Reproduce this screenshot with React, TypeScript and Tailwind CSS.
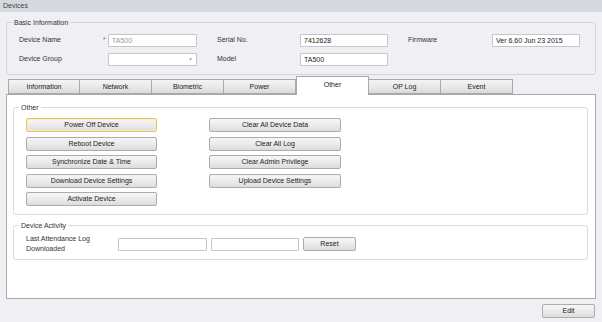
const LEFT_ACTIONS = ['Power Off Device', 'Reboot Device', 'Synchronize Date & Time', 'Download Device Settings', 'Activate Device']
const RIGHT_ACTIONS = ['Clear All Device Data', 'Clear All Log', 'Clear Admin Privilege', 'Upload Device Settings']
const TABS = ['Information', 'Network', 'Biometric', 'Power', 'Other', 'OP Log', 'Event']

function Btn({ label, focused = false, className = '' }: { label: string; focused?: boolean; className?: string }) {
  return (
    <button
      className={
        'h-[14px] rounded-[2px] border bg-gradient-to-b from-[#f6f6f6] via-[#ebebeb] to-[#dcdcdc] text-[7px] leading-[12px] text-[#222] ' +
        (focused ? 'border-[#e3c26a] shadow-[inset_0_0_0_1px_#fbeec4] ' : 'border-[#acacac] ') +
        className
      }
    >
      {label}
    </button>
  )
}

function Field({ value = '', muted = false, dropdown = false, className = '' }: { value?: string; muted?: boolean; dropdown?: boolean; className?: string }) {
  return (
    <div
      className={
        'relative h-[13px] rounded-[1px] border border-[#c3c6cc] bg-white px-[3px] text-[7px] leading-[11px] ' +
        (muted ? 'text-[#9a9a9a] ' : 'text-[#222] ') +
        className
      }
    >
      {value}
      {dropdown && <span className="absolute right-[3px] top-0 text-[5px] leading-[11px] text-[#b0b0b0]">▼</span>}
    </div>
  )
}

function GroupLabel({ text }: { text: string }) {
  return <span className="absolute left-[5px] top-[-5px] bg-inherit px-[2px] text-[7px] leading-[9px] text-[#333]">{text}</span>
}

export default function App() {
  return (
    <div className="w-[602px] h-[322px] bg-[#efeff4] flex flex-col font-['Liberation_Sans',Arial,sans-serif] text-[7px] text-[#333] overflow-hidden">
      {/* Title bar */}
      <div className="h-[12px] bg-[#d6d9e0] px-[3px] leading-[12px] text-[#444]">Devices</div>

      {/* Basic information */}
      <div className="relative mx-[6px] mt-[10px] h-[53px] rounded-[3px] border border-[#d6d6da] bg-[#efeff4] pl-[12px] pt-[11px] flex flex-col gap-[6px]">
        <GroupLabel text="Basic Information" />
        <div className="flex items-center">
          <span className="w-[84px]">Device Name</span>
          <span className="w-[5px] text-[#e0483c]">*</span>
          <Field value="TA500" muted className="w-[89px]" />
          <span className="ml-[20px] w-[83px]">Serial No.</span>
          <Field value="7412628" className="w-[88px]" />
          <span className="ml-[20px] w-[84px]">Firmware</span>
          <Field value="Ver 6.60 Jun 23 2015" className="w-[88px]" />
        </div>
        <div className="flex items-center">
          <span className="w-[89px]">Device Group</span>
          <Field dropdown className="w-[89px]" />
          <span className="ml-[20px] w-[83px]">Model</span>
          <Field value="TA500" className="w-[88px]" />
        </div>
      </div>

      {/* Tabs */}
      <div className="mx-[6px] mt-[1px] flex items-end pl-[2px] h-[18px] relative z-10">
        {TABS.map((t) =>
          t === 'Other' ? (
            <div key={t} className="w-[73px] h-[19px] mb-[-1px] border border-b-0 border-[#a9a9a9] bg-white text-center leading-[15px] text-[#222]">
              {t}
            </div>
          ) : (
            <div
              key={t}
              className="w-[72px] h-[15px] border border-[#a9a9a9] border-l-0 first:border-l bg-gradient-to-b from-[#f4f4f4] via-[#e9e9e9] to-[#dadada] text-center leading-[13px] text-[#222]"
            >
              {t}
            </div>
          )
        )}
      </div>

      {/* Tab panel */}
      <div className="mx-[6px] h-[205px] border border-[#a9a9a9] bg-white pl-[6px] pr-[7px] pt-[12px]">
        <div className="relative h-[108px] rounded-[3px] border border-[#dcdcdc] bg-white pl-[12px] pt-[10px] flex gap-[52px]">
          <GroupLabel text="Other" />
          <div className="flex flex-col gap-[4.5px]">
            {LEFT_ACTIONS.map((a, i) => (
              <Btn key={a} label={a} focused={i === 0} className="w-[131px]" />
            ))}
          </div>
          <div className="flex flex-col gap-[4.5px]">
            {RIGHT_ACTIONS.map((a) => (
              <Btn key={a} label={a} className="w-[132px]" />
            ))}
          </div>
        </div>

        <div className="relative mt-[10px] h-[35px] rounded-[3px] border border-[#dcdcdc] bg-white pl-[12px] flex items-center pt-[3px]">
          <GroupLabel text="Device Activity" />
          <div className="w-[92px] leading-[10px] text-[#333]">
            Last Attendance Log
            <br />
            Downloaded
          </div>
          <Field className="w-[89px]" />
          <Field className="ml-[4px] w-[88px]" />
          <Btn label="Reset" className="ml-[4px] w-[53px]" />
        </div>
      </div>

      {/* Footer */}
      <div className="flex justify-end pr-[7px] pt-[5px]">
        <Btn label="Edit" className="w-[53px]" />
      </div>
    </div>
  )
}
